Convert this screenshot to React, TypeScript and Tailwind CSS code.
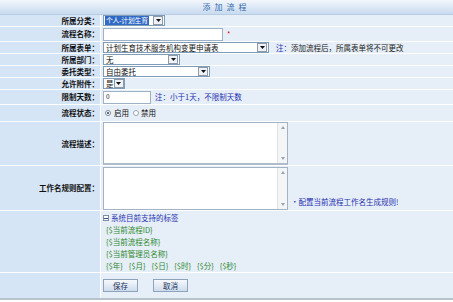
import React from "react";

function Arrow() {
  return (
    <span className="ml-auto mr-[1px] flex h-[9px] w-[10px] shrink-0 items-center justify-center border border-[#8e9aa8] bg-[#eef1f5]">
      <svg width="5" height="3" viewBox="0 0 5 3">
        <path d="M0 0 L5 0 L2.5 3 Z" fill="#111" />
      </svg>
    </span>
  );
}

function Select({ w, text, hl }: { w: string; text: string; hl?: boolean }) {
  return (
    <div className={`flex h-[11px] items-center overflow-hidden whitespace-nowrap border border-[#7f9db9] bg-white ${w}`}>
      {hl ? (
        <span className="ml-[1px] bg-[#316ac5] px-[1px] text-[6.8px] leading-[9px] tracking-[-0.2px] text-white">{text}</span>
      ) : (
        <span className="ml-[2px] leading-[9px] text-[#111]">{text}</span>
      )}
      <Arrow />
    </div>
  );
}

function Scroll() {
  return (
    <div className="flex h-full w-[10px] flex-col items-center justify-between border-l border-[#dfe3e8] bg-[#f4f5f7] py-[3px]">
      <svg width="4" height="3" viewBox="0 0 4 3">
        <path d="M0 3 L4 3 L2 0 Z" fill="#9aa3ad" />
      </svg>
      <svg width="4" height="3" viewBox="0 0 4 3">
        <path d="M0 0 L4 0 L2 3 Z" fill="#9aa3ad" />
      </svg>
    </div>
  );
}

function Label({ children }: { children: React.ReactNode }) {
  return (
    <div className="flex w-[101px] shrink-0 items-center justify-end whitespace-nowrap border-r border-white bg-[#d6e5f6] pr-[1px] font-bold text-[#111]">
      {children}
    </div>
  );
}

export default function App() {
  return (
    <div className="h-[302px] w-[453px] bg-white font-['Noto_Sans_CJK_SC','Noto_Sans',sans-serif] text-[7.5px]">
      <div className="w-[453px] border-b-2 border-[#b9c3cc]">
        <div className="flex h-[15px] items-center justify-center border-b border-[#b8cde3] bg-gradient-to-b from-[#f3f7fc] to-[#c8dbf0] text-[8px] tracking-[4px] text-[#3669ad]">
          添加流程
        </div>

        <div className="flex h-[12px] border-b border-white">
          <Label>所属分类：</Label>
          <div className="flex flex-1 items-center bg-[#e6eef8] pl-[2px]">
            <Select w="w-[62px]" text="个人-计划生育" hl />
          </div>
        </div>

        <div className="flex h-[15px] border-b border-white">
          <Label>流程名称：</Label>
          <div className="flex flex-1 items-center bg-[#e6eef8] pl-[2px]">
            <div className="h-[13px] w-[120px] border border-[#9fb1c4] bg-white" />
            <span className="ml-[4px] text-[#e00]">*</span>
          </div>
        </div>

        <div className="flex h-[12px] border-b border-white">
          <Label>所属表单：</Label>
          <div className="flex flex-1 items-center whitespace-nowrap bg-[#e6eef8] pl-[2px]">
            <Select w="w-[166px]" text="计划生育技术服务机构变更申请表" />
            <span className="ml-[7px] text-[#1f2fb0]">注：</span>
            <span className="text-[#222]">添加流程后，所属表单将不可更改</span>
          </div>
        </div>

        <div className="flex h-[12px] border-b border-white">
          <Label>所属部门：</Label>
          <div className="flex flex-1 items-center bg-[#e6eef8] pl-[2px]">
            <Select w="w-[77px]" text="无" />
          </div>
        </div>

        <div className="flex h-[12px] border-b border-white">
          <Label>委托类型：</Label>
          <div className="flex flex-1 items-center bg-[#e6eef8] pl-[2px]">
            <Select w="w-[107px]" text="自由委托" />
          </div>
        </div>

        <div className="flex h-[12px] border-b border-white">
          <Label>允许附件：</Label>
          <div className="flex flex-1 items-center bg-[#e6eef8] pl-[2px]">
            <Select w="w-[22px]" text="是" />
          </div>
        </div>

        <div className="flex h-[15px] border-b border-white">
          <Label>限制天数：</Label>
          <div className="flex flex-1 items-center bg-[#e6eef8] pl-[2px]">
            <div className="flex h-[13px] w-[48px] items-center border border-[#9fb1c4] bg-white pl-[2px] text-[6.5px] text-[#111]">
              0
            </div>
            <span className="ml-[4px] text-[#1f2fb0]">注：小于1天，不限制天数</span>
          </div>
        </div>

        <div className="flex h-[17px] border-b border-white">
          <Label>流程状态：</Label>
          <div className="flex flex-1 items-center bg-[#e6eef8] pl-[4px] text-[#111]">
            <span className="flex h-[6px] w-[6px] items-center justify-center rounded-full border border-[#7a8896] bg-white">
              <span className="h-[2px] w-[2px] rounded-full bg-[#2a3a4a]" />
            </span>
            <span className="ml-[3px]">启用</span>
            <span className="ml-[4px] h-[6px] w-[6px] rounded-full border border-[#9aa6b2] bg-white" />
            <span className="ml-[2px]">禁用</span>
          </div>
        </div>

        <div className="flex h-[44px] border-b border-white">
          <Label>流程描述：</Label>
          <div className="flex flex-1 items-center bg-[#e6eef8] pl-[2px]">
            <div className="flex h-[43px] w-[185px] justify-end border border-[#a4b3c3] border-b-2 border-b-[#b0bcc9] bg-white">
              <Scroll />
            </div>
          </div>
        </div>

        <div className="flex h-[45px] border-b border-white">
          <Label>工作名规则配置：</Label>
          <div className="flex flex-1 items-center bg-[#e6eef8] pl-[2px]">
            <div className="flex h-[43px] w-[185px] justify-end border border-[#a4b3c3] bg-white">
              <Scroll />
            </div>
            <span className="ml-[3px] mt-[28px] text-[#1f2fb0]">•配置当前流程工作名生成规则!</span>
          </div>
        </div>

        <div className="flex h-[62px] border-b border-white">
          <div className="w-[101px] shrink-0 border-r border-white bg-[#d6e5f6]" />
          <div className="flex flex-1 flex-col bg-[#e6eef8] pl-[2px] pt-[1px] leading-[12px]">
            <div className="flex items-center text-[#2a35b0]">
              <span className="mr-[2px] flex h-[6px] w-[6px] items-center justify-center border border-[#7d8fa6] bg-white">
                <span className="h-[1px] w-[4px] bg-[#3a4a8a]" />
              </span>
              系统目前支持的标签
            </div>
            <div className="pl-[3px] text-[#2f8a2f]">{"{$当前流程ID}"}</div>
            <div className="pl-[3px] text-[#2f8a2f]">{"{$当前流程名称}"}</div>
            <div className="pl-[3px] text-[#2f8a2f]">{"{$当前管理员名称}"}</div>
            <div className="flex gap-[6px] pl-[3px] text-[#2f8a2f]">
              <span>{"{$年}"}</span>
              <span>{"{$月}"}</span>
              <span>{"{$日}"}</span>
              <span>{"{$时}"}</span>
              <span>{"{$分}"}</span>
              <span>{"{$秒}"}</span>
            </div>
          </div>
        </div>

        <div className="flex h-[25px]">
          <div className="w-[101px] shrink-0 border-r border-white bg-[#d6e5f6]" />
          <div className="flex flex-1 items-center gap-[15px] bg-[#e6eef8] pl-[2px]">
            <button className="flex h-[13px] w-[35px] items-center justify-center border border-[#8ea4bd] bg-gradient-to-b from-[#f6f9fd] to-[#cfdced] text-[7.5px] text-[#1c2f58]">
              保存
            </button>
            <button className="flex h-[13px] w-[35px] items-center justify-center border border-[#8ea4bd] bg-gradient-to-b from-[#f6f9fd] to-[#cfdced] text-[7.5px] text-[#1c2f58]">
              取消
            </button>
          </div>
        </div>
      </div>
    </div>
  );
}
